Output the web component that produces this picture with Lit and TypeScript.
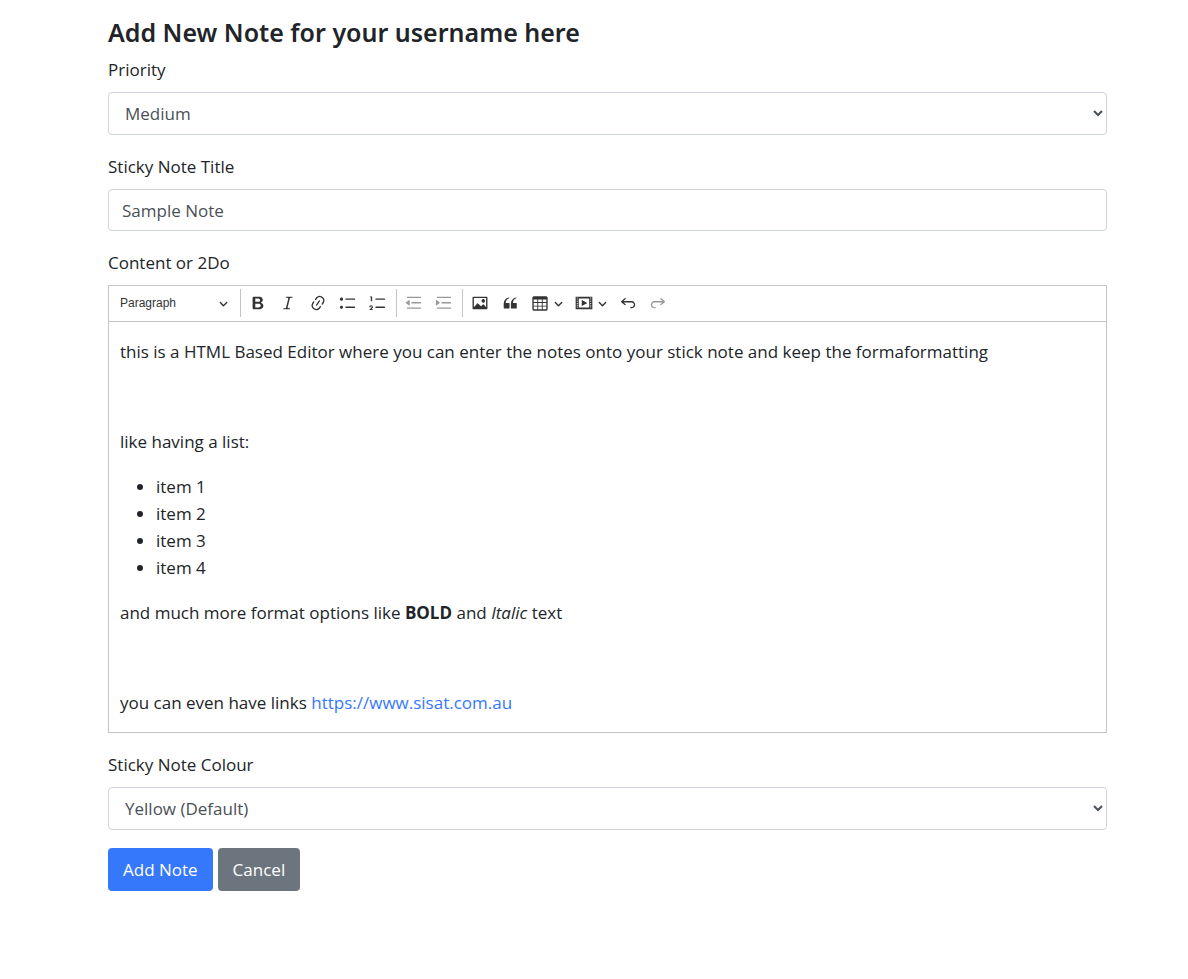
import { LitElement, html, css, svg } from "lit";
import { customElement } from "lit/decorators.js";

const ICONS: Record<string, string> = {
  bold: "M10.187 17H5.773c-.637 0-1.092-.138-1.364-.415-.273-.277-.409-.718-.409-1.323V4.738c0-.617.14-1.062.419-1.332.279-.27.73-.406 1.354-.406h4.68c.69 0 1.288.041 1.793.124.506.083.96.242 1.36.478.341.197.644.447.906.75a3.262 3.262 0 0 1 .808 2.162c0 1.401-.722 2.426-2.167 3.075C15.05 10.175 16 11.315 16 13.01a3.756 3.756 0 0 1-2.296 3.504 6.1 6.1 0 0 1-1.517.377c-.571.073-1.238.11-2 .11zm-.217-6.217H7v4.087h3.069c1.977 0 2.965-.69 2.965-2.072 0-.707-.256-1.22-.768-1.537-.512-.319-1.277-.478-2.296-.478zM7 5.13v3.619h2.606c.729 0 1.292-.067 1.69-.2a1.6 1.6 0 0 0 .91-.765c.165-.267.247-.566.247-.897 0-.707-.26-1.176-.778-1.409-.519-.232-1.31-.348-2.375-.348H7z",
  italic: "m9.586 14.633.021.004c-.036.335.095.655.393.962.082.083.173.15.274.201h1.474a.6.6 0 1 1 0 1.2H5.304a.6.6 0 0 1 0-1.2h1.15c.474-.07.809-.182 1.005-.334.157-.122.291-.32.404-.597l2.416-9.55a1.053 1.053 0 0 0-.281-.823 1.12 1.12 0 0 0-.442-.296H8.15a.6.6 0 0 1 0-1.2h6.443a.6.6 0 1 1 0 1.2h-1.195c-.376.056-.65.155-.823.296-.215.175-.423.439-.623.79l-2.366 9.347z",
  link: "m11.077 15 .991-1.416a.75.75 0 1 1 1.229.86l-1.148 1.64a.748.748 0 0 1-.217.206 5.251 5.251 0 0 1-8.503-5.955.741.741 0 0 1 .12-.274l1.147-1.639a.75.75 0 1 1 1.228.86L4.933 10.7l.006.003a3.75 3.75 0 0 0 6.132 4.294l.006.004zm5.494-5.335a.748.748 0 0 1-.12.274l-1.147 1.639a.75.75 0 1 1-1.228-.86l.86-1.23a3.75 3.75 0 0 0-6.144-4.301l-.86 1.229a.75.75 0 0 1-1.229-.86l1.148-1.64a.748.748 0 0 1 .217-.206 5.251 5.251 0 0 1 8.503 5.955zm-4.563-2.532a.75.75 0 0 1 .184 1.045l-3.155 4.505a.75.75 0 1 1-1.229-.86l3.155-4.506a.75.75 0 0 1 1.045-.184z",
  bullets: "M7 5.75c0 .414.336.75.75.75h9.5a.75.75 0 1 0 0-1.5h-9.5a.75.75 0 0 0-.75.75zm-6 0C1 4.784 1.777 4 2.75 4c.966 0 1.75.777 1.75 1.75 0 .966-.777 1.75-1.75 1.75C1.784 7.5 1 6.723 1 5.75zm6 9c0 .414.336.75.75.75h9.5a.75.75 0 1 0 0-1.5h-9.5a.75.75 0 0 0-.75.75zm-6 0c0-.966.777-1.75 1.75-1.75.966 0 1.75.777 1.75 1.75 0 .966-.777 1.75-1.75 1.75-.966 0-1.75-.777-1.75-1.75z",
  numbers: "M7 5.75c0 .414.336.75.75.75h9.5a.75.75 0 1 0 0-1.5h-9.5a.75.75 0 0 0-.75.75zM7 14.75c0 .414.336.75.75.75h9.5a.75.75 0 1 0 0-1.5h-9.5a.75.75 0 0 0-.75.75zM3.5 3v5H2V3.7H1v-1h2.5V3zM.343 17.857l2.59-3.257H2.92a.6.6 0 1 0-1.04 0H.302a2 2 0 1 1 3.995 0h-.001c-.048.405-.16.734-.333.988-.175.254-.59.692-1.244 1.312H4.3v1h-4l.043-.043z",
  outdent: "M2.75 3h14.5a.75.75 0 0 1 0 1.5H2.75a.75.75 0 0 1 0-1.5zM7.75 9h9.5a.75.75 0 0 1 0 1.5h-9.5a.75.75 0 0 1 0-1.5zM2.75 15h14.5a.75.75 0 0 1 0 1.5H2.75a.75.75 0 0 1 0-1.5zM.9 9.4 4.7 6.8q.5-.3.5.3v5.3q0 .6-.5.3L.9 10.1q-.4-.35 0-.7z",
  indent: "M2.75 3h14.5a.75.75 0 0 1 0 1.5H2.75a.75.75 0 0 1 0-1.5zM7.75 9h9.5a.75.75 0 0 1 0 1.5h-9.5a.75.75 0 0 1 0-1.5zM2.75 15h14.5a.75.75 0 0 1 0 1.5H2.75a.75.75 0 0 1 0-1.5zM5.3 9.4 1.5 6.8q-.5-.3-.5.3v5.3q0 .6.5.3l3.8-2.6q.4-.35 0-.7z",
  image: "M6.91 10.54c.26-.23.64-.21.88.03l3.36 3.14 2.23-2.06a.64.64 0 0 1 .87 0l2.52 2.97V4.5H3.2v10.12l3.71-4.08zm10.27-7.51c.6 0 1.09.47 1.09 1.05v11.84c0 .59-.49 1.06-1.09 1.06H2.79c-.6 0-1.09-.47-1.09-1.06V4.08c0-.58.49-1.05 1.1-1.05h14.38zm-5.22 5.56a1.96 1.96 0 1 1 3.4-1.96 1.96 1.96 0 0 1-3.4 1.96z",
  quote: "M3 10.423a6.5 6.5 0 0 1 6.056-6.408l.038.67C6.448 5.423 5.354 7.663 5.22 10H9c.552 0 .5.432.5.986v4.511c0 .554-.448.503-1 .503h-5c-.552 0-.5-.449-.5-1.003v-4.574zm8 0a6.5 6.5 0 0 1 6.056-6.408l.038.67c-2.646.739-3.74 2.979-3.873 5.315H17c.552 0 .5.432.5.986v4.511c0 .554-.448.503-1 .503h-5c-.552 0-.5-.449-.5-1.003v-4.574z",
  table: "M3 6v3h4V6H3zm0 4v3h4v-3H3zm0 4v3h4v-3H3zm5 3h4v-3H8v3zm5 0h4v-3h-4v3zm4-4v-3h-4v3h4zm0-4V6h-4v3h4zm1.5 8a1.5 1.5 0 0 1-1.5 1.5H3A1.5 1.5 0 0 1 1.5 17V4c.222-.863 1.068-1.5 2-1.5h13c.932 0 1.778.637 2 1.5v13zM12 13v-3H8v3h4zm0-4V6H8v3h4z",
  media: "M18.68 3.03c.6 0 .59-.03.59.55v12.84c0 .59.01.56-.59.56H1.29c-.6 0-.59.03-.59-.56V3.58c0-.58-.01-.55.6-.55h17.38zM15.77 15V5H4.2v10h11.57zM2 4v1h1V4H2zm0 2v1h1V6H2zm0 2v1h1V8H2zm0 2v1h1v-1H2zm0 2v1h1v-1H2zm0 2v1h1v-1H2zM17 4v1h1V4h-1zm0 2v1h1V6h-1zm0 2v1h1V8h-1zm0 2v1h1v-1h-1zm0 2v1h1v-1h-1zm0 2v1h1v-1h-1zM7.5 7.177a.4.4 0 0 1 .593-.351l5.133 2.824a.4.4 0 0 1 0 .7l-5.133 2.824a.4.4 0 0 1-.593-.35V7.176v.001z",
  undo: "m5.042 9.367 2.189 1.837a.75.75 0 0 1-.965 1.149l-3.788-3.18a.747.747 0 0 1-.21-.284.75.75 0 0 1 .17-.945L6.23 4.762a.75.75 0 1 1 .964 1.15L4.863 7.866h8.917A.75.75 0 0 1 14 7.9a4 4 0 1 1-1.477 7.718l.344-1.489a2.5 2.5 0 1 0 1.094-4.73l.008-.032H5.042z",
  redo: "m14.958 9.367-2.189 1.837a.75.75 0 0 0 .965 1.149l3.788-3.18a.747.747 0 0 0 .21-.284.75.75 0 0 0-.17-.945L13.77 4.762a.75.75 0 1 0-.964 1.15l2.331 1.954H6.22A.75.75 0 0 0 6 7.9a4 4 0 1 0 1.477 7.718l-.344-1.489A2.5 2.5 0 1 1 6.039 9.4l-.008-.032h8.927z",
};

const icon = (name: string) => html`<svg class="icon" viewBox="0 0 20 20" aria-hidden="true">
  ${svg`<path d=${ICONS[name]}></path>`}
</svg>`;

const arrow = html`<svg class="arrow" viewBox="0 0 10 10" aria-hidden="true">
  <path d="M.941 4.523a.75.75 0 1 1 1.06-1.06l3.006 3.005 3.005-3.005a.75.75 0 1 1 1.06 1.06l-3.549 3.55a.75.75 0 0 1-1.168-.136L.941 4.523z"></path>
</svg>`;

const tool = (name: string, label: string, disabled = false) =>
  html`<button type="button" class="tool" aria-label=${label} ?disabled=${disabled}>${icon(name)}</button>`;

const menuTool = (name: string, label: string) =>
  html`<button type="button" class="tool menu" aria-label=${label} aria-haspopup="true">${icon(name)}${arrow}</button>`;

const separator = html`<span class="separator"></span>`;

@customElement("app-root")
export class AppRoot extends LitElement {
  static styles = css`
    :host {
      display: block;
      padding: 16px 0 0 27px;
      background: #fff;
      color: #212529;
      font-family: "Segoe UI", "Open Sans", "Noto Sans", sans-serif;
      font-size: 17px;
      line-height: 27px;
    }
    * {
      box-sizing: border-box;
    }
    .page {
      max-width: 999px;
      margin: 0 auto;
    }
    h1 {
      margin: 0 0 8px;
      font-family: "Segoe UI", "Noto Sans", "Open Sans", sans-serif;
      font-size: 25px;
      font-weight: 600;
      line-height: 32px;
    }
    .field {
      margin-bottom: 18px;
    }
    .label {
      display: block;
      margin-bottom: 9px;
    }
    .control {
      display: block;
      width: 100%;
      height: 42px;
      padding: 6px 13px;
      border: 1px solid #ced4da;
      border-radius: 4px;
      background: #fff;
      color: #495057;
      font: inherit;
    }
    select.control {
      height: 43px;
      padding: 6px 0 6px 12px;
    }
    .editor {
      border: 1px solid #c4c4c4;
    }
    .toolbar {
      display: flex;
      flex-wrap: wrap;
      align-items: center;
      gap: 2px;
      min-height: 36px;
      padding: 0 2px 1px;
      border-bottom: 1px solid #c4c4c4;
      color: #333;
    }
    .heading {
      display: grid;
      align-items: center;
      width: 125px;
    }
    .heading select,
    .heading .arrow {
      grid-area: 1 / 1;
    }
    .heading select {
      appearance: none;
      height: 28px;
      padding: 0 9px;
      border: 0;
      background: transparent;
      color: #333;
      font: 12px "Liberation Sans", Arial, sans-serif;
    }
    .heading .arrow {
      justify-self: end;
      margin-right: 8px;
      pointer-events: none;
    }
    .separator {
      width: 1px;
      height: 28px;
      margin: 0 1px 0 2px;
      background: #c4c4c4;
    }
    .tool {
      display: flex;
      align-items: center;
      justify-content: center;
      gap: 5px;
      width: 28px;
      height: 28px;
      padding: 0;
      border: 0;
      background: transparent;
      color: inherit;
    }
    .tool.menu {
      width: 42px;
    }
    .tool:disabled {
      opacity: 0.5;
    }
    .icon {
      width: 18px;
      height: 18px;
      fill: currentColor;
    }
    .arrow {
      width: 9px;
      height: 9px;
      fill: currentColor;
    }
    .content {
      padding: 16px 11px;
      outline: 0;
    }
    .content p {
      margin: 0 0 18px;
    }
    .content p:last-child {
      margin: 0;
    }
    .content ul {
      margin: 0 0 18px;
      padding-left: 36px;
    }
    a {
      color: #3578fc;
      text-decoration: none;
    }
    .actions {
      display: flex;
      gap: 5px;
    }
    .button {
      height: 43px;
      padding: 0 15px;
      border: 0;
      border-radius: 4px;
      color: #fff;
      font: inherit;
    }
    .primary {
      background: #3578fc;
    }
    .secondary {
      background: #6c757d;
    }
  `;

  render() {
    return html`
      <form class="page">
        <h1>Add New Note for your username here</h1>
        <div class="field">
          <label class="label" for="priority">Priority</label>
          <select class="control" id="priority">
            <option>Low</option>
            <option selected>Medium</option>
            <option>High</option>
          </select>
        </div>
        <div class="field">
          <label class="label" for="title">Sticky Note Title</label>
          <input class="control" id="title" type="text" value="Sample Note" />
        </div>
        <div class="field">
          <span class="label" id="content-label">Content or 2Do</span>
          <div class="editor">
            <div class="toolbar" role="toolbar">
              <div class="heading">
                <select aria-label="Heading">
                  <option>Paragraph</option>
                  <option>Heading 1</option>
                  <option>Heading 2</option>
                </select>
                ${arrow}
              </div>
              ${separator} ${tool("bold", "Bold")} ${tool("italic", "Italic")} ${tool("link", "Link")}
              ${tool("bullets", "Bulleted List")} ${tool("numbers", "Numbered List")} ${separator}
              ${tool("outdent", "Decrease indent", true)} ${tool("indent", "Increase indent", true)} ${separator}
              ${tool("image", "Insert image")} ${tool("quote", "Block quote")} ${menuTool("table", "Insert table")}
              ${menuTool("media", "Insert media")} ${tool("undo", "Undo")} ${tool("redo", "Redo", true)}
            </div>
            <div class="content" contenteditable="true" role="textbox" aria-multiline="true" aria-labelledby="content-label" spellcheck="false">
              <p>this is a HTML Based Editor where you can enter the notes onto your stick note and keep the formaformatting</p>
              <p><br /></p>
              <p>like having a list:</p>
              <ul>
                <li>item 1</li>
                <li>item 2</li>
                <li>item 3</li>
                <li>item 4</li>
              </ul>
              <p>and much more format options like <strong>BOLD</strong> and <em>Italic</em> text</p>
              <p><br /></p>
              <p>you can even have links <a href="https://www.sisat.com.au">https://www.sisat.com.au</a></p>
            </div>
          </div>
        </div>
        <div class="field">
          <label class="label" for="colour">Sticky Note Colour</label>
          <select class="control" id="colour">
            <option>Yellow (Default)</option>
            <option>Blue</option>
            <option>Green</option>
          </select>
        </div>
        <div class="actions">
          <button type="button" class="button primary">Add Note</button>
          <button type="button" class="button secondary">Cancel</button>
        </div>
      </form>
    `;
  }
}
